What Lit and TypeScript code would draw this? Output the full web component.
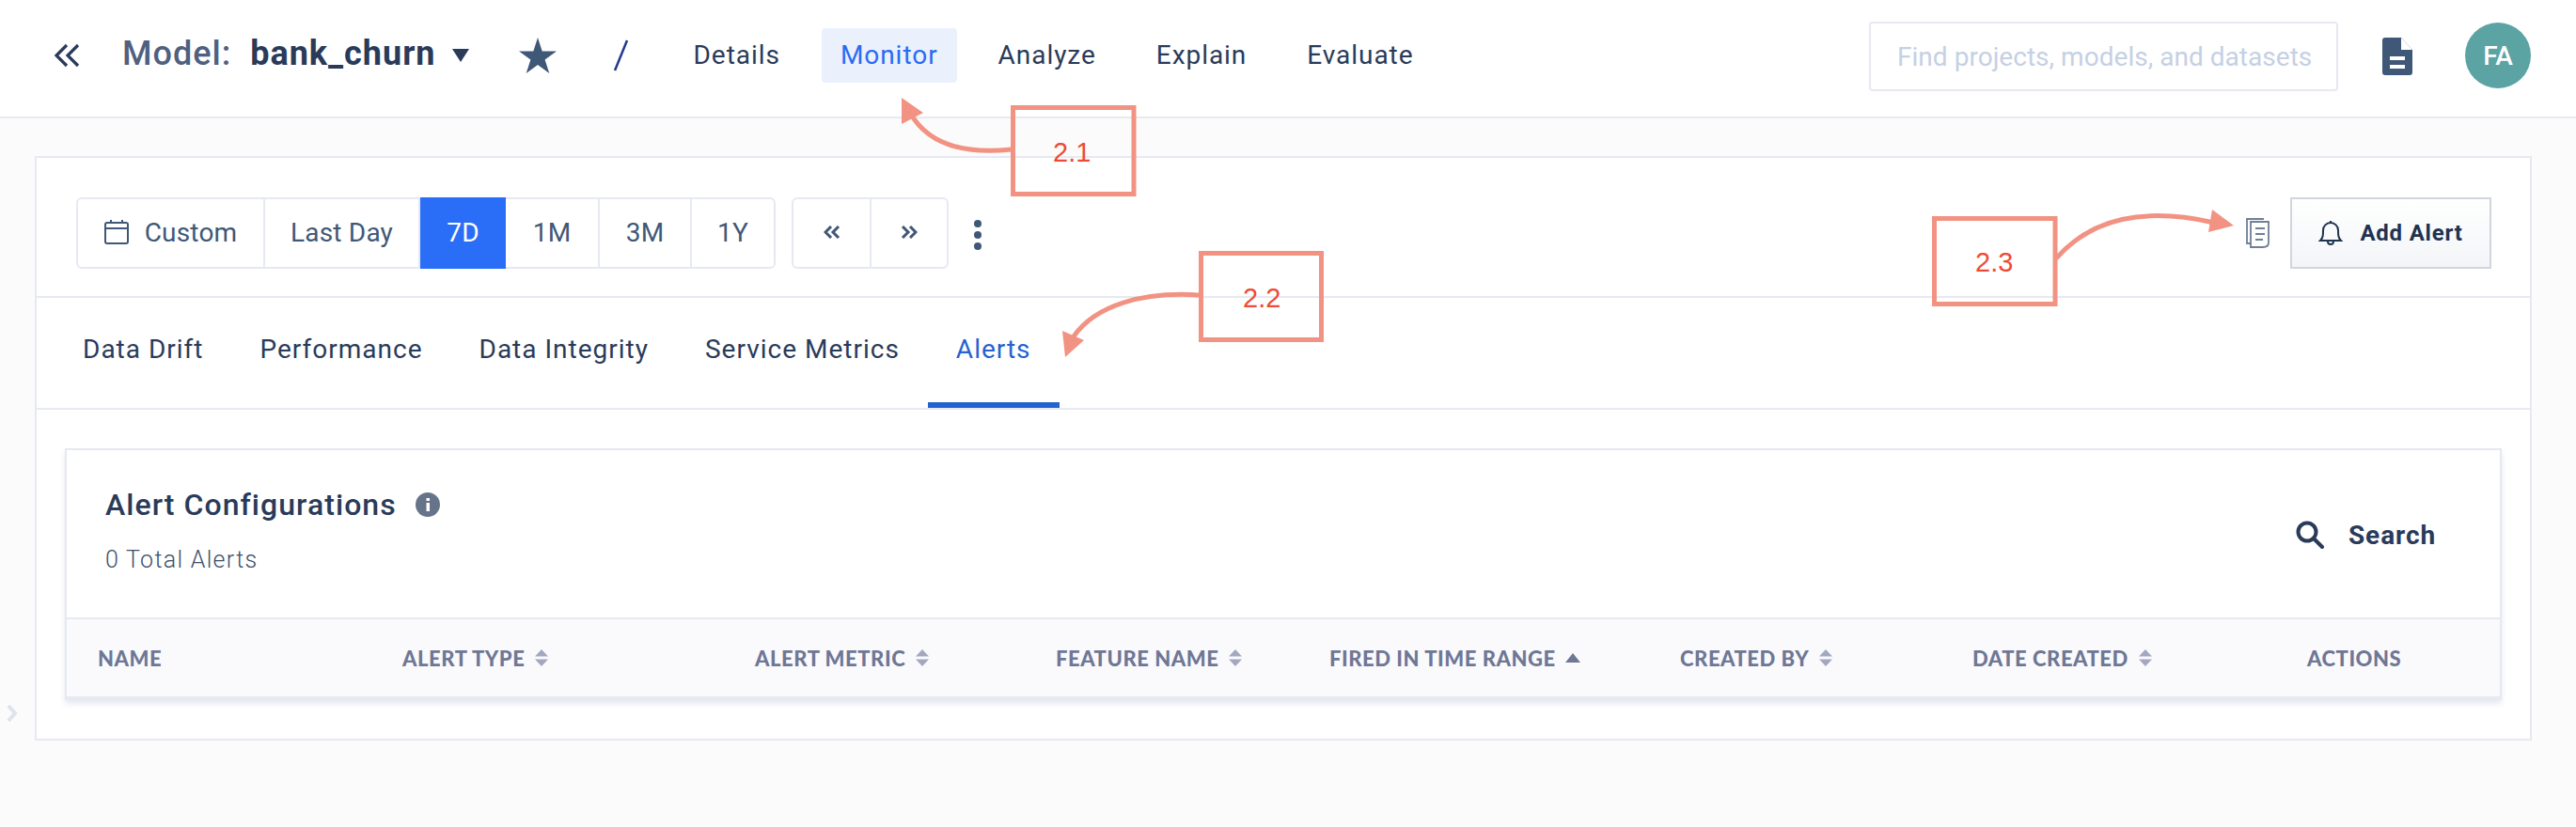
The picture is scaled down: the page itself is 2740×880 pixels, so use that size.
import { LitElement, html, css, svg } from "lit";
import { customElement } from "lit/decorators.js";

const sort = html`<svg class="sort" width="16" height="18" viewBox="0 0 16 18"><path d="M8 0l7 7.500H1z" fill="#a4a8bf"/><path d="M1 10.500h14L8 18z" fill="#a4a8bf"/></svg>`;
const cols: [string, number, string][] = [
  ["NAME", 324, ""],
  ["ALERT TYPE", 375, "s"],
  ["ALERT METRIC", 320, "s"],
  ["FEATURE NAME", 291, "s"],
  ["FIRED IN TIME RANGE", 373, "u"],
  ["CREATED BY", 311, "s"],
  ["DATE CREATED", 356, "s"],
  ["ACTIONS", 200, ""],
];

@customElement("app-root")
export class AppRoot extends LitElement {
  static styles = css`
    :host { display: block; width: 2740px; height: 880px; position: relative; background: #fbfbfc; font-family: Roboto, sans-serif; color: #2a3b5a; overflow: hidden; }
    .top { height: 124px; box-sizing: content-box; background: #fff; border-bottom: 2px solid #e6e9f2; display: flex; align-items: center; }
    .back { margin-left: 54px; width: 32px; height: 28px; margin-top: -7px; }
    .model { margin-left: 44px; font-size: 36px; font-weight: 500; color: #4f6080; letter-spacing: 1px; line-height: 42px; margin-top: -10px; }
    .name { margin-left: 20px; font-size: 36px; font-weight: 700; color: #2a3b5a; letter-spacing: 1px; line-height: 42px; margin-top: -10px; }
    .caret { margin-left: 17px; margin-top: -6px; }
    .star { margin-left: 53px; margin-top: -6px; }
    .slash { margin-left: 59px; margin-top: -6px; }
    .nav { margin-left: 49px; display: flex; gap: 24px; align-items: center; margin-top: -6px; }
    .nav a { font-size: 28px; letter-spacing: .95px; padding: 0 20px; height: 58px; line-height: 58px; border-radius: 4px; color: #2a3b5a; }
    .nav a.on { background: #eaf1fd; color: #2a6bf2; }
    .find { position: relative; margin-left: auto; width: 499px; height: 74px; box-sizing: border-box; border: 2px solid #e6e9f2; border-radius: 4px; font-size: 28px; letter-spacing: .03px; color: #c5d0e4; display: flex; align-items: center; padding-left: 28px; margin-top: -4px; }
    .doc { margin-left: 47px; margin-top: -4px; }
    .av { margin-left: 56px; margin-right: 48px; width: 70px; height: 70px; border-radius: 50%; background: #5ca3a3; color: #fff; font-size: 28px; font-weight: 500; display: flex; align-items: center; justify-content: center; margin-top: -6px; }

    .card { margin: 40px 47px 0 37px; height: 622px; box-sizing: border-box; background: #fff; border: 2px solid #e6e9f2; display: flex; flex-direction: column; }
    .tools { height: 149px; box-sizing: border-box; border-bottom: 2px solid #e6e9f2; padding: 42px 0 0 42px; display: flex; align-items: flex-start; }
    .grp { display: flex; height: 76px; box-sizing: border-box; border: 2px solid #e6e9f2; border-radius: 6px; }
    .grp > div { display: flex; align-items: center; justify-content: center; font-size: 28px; color: #3f5877; box-sizing: border-box; border-right: 2px solid #e6e9f2; letter-spacing: .2px; padding-bottom: 2px; }
    .grp > div:last-child { border-right: none; }
    .grp > .sel { background: #2a6ef8; color: #fff; margin: -2px 0; border-right: none; }
    .cust { gap: 17px; }
    .grp2 { margin-left: 17px; }
    .dots { margin-left: 27px; margin-top: 24px; display: flex; flex-direction: column; gap: 4px; }
    .dots i { width: 8px; height: 8px; border-radius: 50%; background: #3f5877; display: block; }
    .right { margin-left: auto; margin-right: 41px; display: flex; align-items: center; gap: 20px; }
    .add { width: 214px; height: 76px; box-sizing: border-box; border: 2px solid #d1d5dd; background: linear-gradient(#fff, #f3f5f8); display: flex; align-items: center; justify-content: center; gap: 18px; font-size: 24px; font-weight: 700; letter-spacing: .8px; color: #1f3350; }
    .tabs { height: 119px; box-sizing: border-box; border-bottom: 2px solid #e6e9f2; display: flex; padding-left: 31px; }
    .tabs a { font-size: 28px; letter-spacing: 1px; padding: 0 30px; line-height: 110px; height: 117px; box-sizing: border-box; color: #2a3b5a; }
    .tabs a.on { color: #2563d0; border-bottom: 6px solid #2563d0; }
    .tabs a.first { padding-left: 18px; }
    .inner { margin: 41px 30px 0 30px; height: 268px; box-sizing: border-box; border: 2px solid #e6e9f2; border-bottom: none; box-shadow: 0 4px 6px #e6e9f2; display: flex; flex-direction: column; }
    .ihead { height: 178px; box-sizing: border-box; display: flex; padding: 40px 68px 0 41px; }
    .t { font-size: 32px; font-weight: 500; letter-spacing: 1.05px; line-height: 36px; display: flex; align-items: center; gap: 20px; }
    .sub { font-size: 25px; font-weight: 300; letter-spacing: 1.3px; margin-top: 25px; line-height: 32px; color: #3f4f6a; }
    .search { margin-left: auto; display: flex; gap: 26px; align-items: center; font-size: 28px; font-weight: 700; letter-spacing: .9px; height: 100px; }
    .th { flex: 1; display: flex; align-items: center; background: #fafafd; border-top: 2px solid #e6e9f2; border-bottom: 4px solid #e6e9f2; padding-left: 33px; }
    .th div { display: flex; align-items: center; gap: 10px; font-family: Lato, sans-serif; font-weight: 900; font-size: 22px; letter-spacing: .55px; color: #6f7795; white-space: nowrap; }
    .side { position: absolute; left: 7px; top: 750px; }
    .over { position: absolute; left: 0; top: 0; pointer-events: none; }
    .lab { position: absolute; font-family: "Liberation Sans", sans-serif; font-size: 29px; color: #ef4a36; line-height: 32px; }
  `;

  render() {
    return html`
      <div class="top">
        <svg class="back" viewBox="0 0 32 28" fill="none" stroke="#2a3b5a" stroke-width="3.200"><path d="M17 3L6 14l11 11M29 3L18 14l11 11"/></svg>
        <div class="model">Model:</div>
        <div class="name">bank_churn</div>
        <svg class="caret" width="18" height="14" viewBox="0 0 18 14"><path d="M0 0h18L9 14z" fill="#2a3b5a"/></svg>
        <svg class="star" width="40" height="38" viewBox="0 0 40 38"><path d="M20 0l4.700 14.500H40L27.600 23.500 32.300 38 20 29 7.700 38l4.700-14.500L0 14.500h15.300z" fill="#3f5877"/></svg>
        <svg class="slash" width="18" height="34" viewBox="0 0 18 34"><path d="M16 1L3 33" stroke="#23398f" stroke-width="2.500"/></svg>
        <div class="nav">
          <a>Details</a><a class="on">Monitor</a><a>Analyze</a><a>Explain</a><a>Evaluate</a>
        </div>
        <div class="find">Find projects, models, and datasets</div>
        <svg class="doc" width="32" height="40" viewBox="0 0 32 40"><path d="M3 0h17l12 13v24a3 3 0 0 1-3 3H3a3 3 0 0 1-3-3V3a3 3 0 0 1 3-3z" fill="#3f5877"/><path d="M20 0l12 13H20z" fill="#fff"/><path d="M8 20h16v4H8zM8 29h16v4H8z" fill="#fff"/></svg>
        <div class="av">FA</div>
      </div>
      <div class="card">
        <div class="tools">
          <div class="grp">
            <div class="cust" style="width:199px">
              <svg width="26" height="26" viewBox="0 0 26 26" fill="none" stroke="#3f5877" stroke-width="2"><rect x="1" y="3" width="24" height="22" rx="2"/><path d="M1 9h24M7 0v4M19 0v4"/></svg>
              <span>Custom</span>
            </div>
            <div style="width:165px">Last Day</div>
            <div class="sel" style="width:91px">7D</div>
            <div style="width:100px">1M</div>
            <div style="width:98px">3M</div>
            <div style="width:87px">1Y</div>
          </div>
          <div class="grp grp2">
            <div style="width:83px"><svg width="18" height="14" viewBox="0 0 18 14" fill="none" stroke="#3f5877" stroke-width="3"><path d="M8 1L2 7l6 6M16 1l-6 6 6 6"/></svg></div>
            <div style="width:80px"><svg width="18" height="14" viewBox="0 0 18 14" fill="none" stroke="#3f5877" stroke-width="3"><path d="M2 1l6 6-6 6M10 1l6 6-6 6"/></svg></div>
          </div>
          <div class="dots"><i></i><i></i><i></i></div>
          <div class="right">
            <svg width="28" height="34" viewBox="0 0 28 34" fill="none" stroke="#6f7f95" stroke-width="1.800"><path d="M20 2H2v26h4"/><path d="M6 5h19v22c0 3-2 5-6 5H6z" fill="#fff"/><path d="M11 12h10M11 18h10M11 24h8"/></svg>
            <div class="add">
              <svg width="26" height="30" viewBox="0 0 26 30" fill="none" stroke="#1f3350" stroke-width="2"><path d="M2 23c3-3 3-6 3-11a8 8 0 0 1 16 0c0 5 0 8 3 11z"/><path d="M10 24a3 3 0 0 0 6 0M13 4V2"/></svg>
              <span>Add Alert</span>
            </div>
          </div>
        </div>
        <div class="tabs">
          <a class="first">Data Drift</a><a>Performance</a><a>Data Integrity</a><a>Service Metrics</a><a class="on">Alerts</a>
        </div>
        <div class="inner">
          <div class="ihead">
            <div>
              <div class="t">Alert Configurations
                <svg width="26" height="26" viewBox="0 0 26 26"><circle cx="13" cy="13" r="13" fill="#667489"/><rect x="11.500" y="11" width="3.500" height="9" fill="#fff"/><rect x="11.500" y="6" width="3.500" height="3" fill="#fff"/></svg>
              </div>
              <div class="sub">0 Total Alerts</div>
            </div>
            <div class="search">
              <svg width="30" height="30" viewBox="0 0 30 30" fill="none" stroke="#2a3b5a" stroke-width="4"><circle cx="12" cy="12" r="9.500"/><path d="M19 19l9 9" stroke-linecap="round"/></svg>
              <span>Search</span>
            </div>
          </div>
          <div class="th">
            ${cols.map(([n, w, k]) => html`<div style="width:${w}px">${n}${k === "s" ? sort : k === "u" ? html`<svg class="sort" width="16" height="10" viewBox="0 0 16 10"><path d="M8 0l8 10H0z" fill="#6f7795"/></svg>` : ""}</div>`)}
          </div>
        </div>
      </div>
      <svg class="side" width="12" height="18" viewBox="0 0 12 18" fill="none" stroke="#dde4ee" stroke-width="4"><path d="M2 1l7 8-7 8"/></svg>
      <svg class="over" width="2740" height="880" viewBox="0 0 2740 880" fill="none" stroke="#f29282">
        ${svg`
          <rect x="1077.500" y="114.500" width="128.500" height="92" stroke-width="5"/>
          <rect x="1277.500" y="269.500" width="128" height="92" stroke-width="5"/>
          <rect x="2057.500" y="232.500" width="128.500" height="91" stroke-width="5"/>
          <path d="M1076 159C1020 165 985 150 968 120" stroke-width="5"/>
          <path d="M959 104l23 16-23 12z" fill="#f29282" stroke="none"/>
          <path d="M1276 314C1215 310 1165 325 1142 358" stroke-width="5"/>
          <path d="M1133 380l-3-28 23 10z" fill="#f29282" stroke="none"/>
          <path d="M2187 275C2225 232 2280 220 2355 237" stroke-width="5"/>
          <path d="M2376 240l-23-17-4 24z" fill="#f29282" stroke="none"/>
        `}
      </svg>
      <div class="lab" style="left:1120px;top:146px">2.1</div>
      <div class="lab" style="left:1322px;top:301px">2.2</div>
      <div class="lab" style="left:2101px;top:263px">2.3</div>
    `;
  }
}
